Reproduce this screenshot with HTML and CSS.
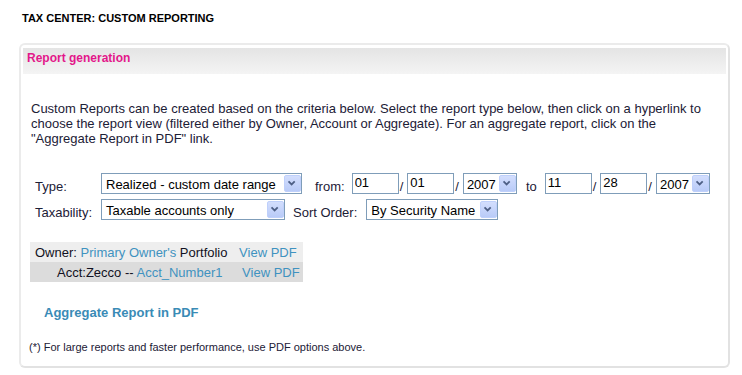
FILE: index.html
```html
<!DOCTYPE html>
<html lang="en">
<head>
    <meta charset="UTF-8">
    <title>Tax Center: Custom Reporting</title>
    <link rel="stylesheet" href="styles.css">
</head>
<body>
    <div class="page">
        <h1>TAX CENTER: CUSTOM REPORTING</h1>

        <div class="panel">
            <div class="panel-header">Report generation</div>

            <div class="panel-body">
                <p class="intro">Custom Reports can be created based on the criteria below. Select the report type below, then click on a hyperlink to choose the report view (filtered either by Owner, Account or Aggregate). For an aggregate report, click on the "Aggregate Report in PDF" link.</p>

                <div class="criteria">
                    <div class="criteria-row">
                        <span class="label">Type:</span>
                        <div class="select select-type">
                            <span class="select-value">Realized - custom date range</span>
                            <span class="select-btn"><svg viewBox="0 0 17 17"><path d="M5 7l3.5 3.5L12 7"/></svg></span>
                        </div>
                        <span class="word word-from">from:</span>
                        <input class="date" type="text" value="01">
                        <span class="slash">/</span>
                        <input class="date" type="text" value="01">
                        <span class="slash">/</span>
                        <div class="select select-year">
                            <span class="select-value">2007</span>
                            <span class="select-btn"><svg viewBox="0 0 17 17"><path d="M5 7l3.5 3.5L12 7"/></svg></span>
                        </div>
                        <span class="word word-to">to</span>
                        <input class="date" type="text" value="11">
                        <span class="slash">/</span>
                        <input class="date" type="text" value="28">
                        <span class="slash">/</span>
                        <div class="select select-year">
                            <span class="select-value">2007</span>
                            <span class="select-btn"><svg viewBox="0 0 17 17"><path d="M5 7l3.5 3.5L12 7"/></svg></span>
                        </div>
                    </div>

                    <div class="criteria-row">
                        <span class="label">Taxability:</span>
                        <div class="select select-tax">
                            <span class="select-value">Taxable accounts only</span>
                            <span class="select-btn"><svg viewBox="0 0 17 17"><path d="M5 7l3.5 3.5L12 7"/></svg></span>
                        </div>
                        <span class="word word-sort">Sort Order:</span>
                        <div class="select select-sort">
                            <span class="select-value">By Security Name</span>
                            <span class="select-btn"><svg viewBox="0 0 17 17"><path d="M5 7l3.5 3.5L12 7"/></svg></span>
                        </div>
                    </div>
                </div>

                <div class="owners">
                    <div class="owner-row">
                        Owner: <a href="#" class="link">Primary Owner's</a> Portfolio
                        <a href="#" class="link view-pdf">View PDF</a>
                    </div>
                    <div class="owner-row account">
                        Acct:Zecco -- <a href="#" class="link">Acct_Number1</a>
                        <a href="#" class="link view-pdf">View PDF</a>
                    </div>
                </div>

                <a href="#" class="aggregate">Aggregate Report in PDF</a>

                <div class="note">(*) For large reports and faster performance, use PDF options above.</div>
            </div>
        </div>
    </div>
</body>
</html>
```

FILE: styles.css
```css
body {
    margin: 0;
    padding: 0;
    font-family: 'Liberation Sans', Arial, sans-serif;
    font-size: 13px;
    color: #1c2036;
    background: #ffffff;
}

.page {
    padding: 12px 0 0 19px;
}

h1 {
    margin: 0 0 18px 0;
    padding-left: 3px;
    font-size: 11px;
    line-height: 13px;
    font-weight: bold;
    color: #000000;
}

.panel {
    width: 711px;
    box-sizing: border-box;
    border: 2px solid #ebebeb;
    border-right-color: #e2e2e2;
    border-bottom-color: #e2e2e2;
    border-radius: 6px;
    padding: 3px 2px 0 2px;
}

.panel-header {
    height: 26px;
    box-sizing: border-box;
    padding: 3px 0 0 4px;
    background: linear-gradient(to bottom, #e4e4e4, #f4f4f4);
    color: #e3178a;
    font-size: 12px;
    line-height: 14px;
    font-weight: bold;
}

.panel-body {
    padding: 27px 0 12px 7px;
}

.intro {
    margin: 0 0 0 1px;
    width: 690px;
    line-height: 15px;
}

.criteria {
    margin-top: 27px;
    padding-left: 5px;
}

.criteria-row {
    display: flex;
    align-items: flex-end;
    line-height: 15px;
}

.criteria-row + .criteria-row {
    margin-top: 5px;
}

.label {
    flex: 0 0 66px;
}

.word-from {
    margin: 0 7px 0 13px;
}

.word-to {
    margin: 0 8px 0 9px;
}

.word-sort {
    margin: 0 9px 0 8px;
}

.slash {
    margin: 0 4px 0 1px;
}

.date {
    width: 47px;
    height: 21px;
    box-sizing: border-box;
    margin: 0;
    padding: 0 2px 3px 2px;
    border: 1px solid #7f9db9;
    border-radius: 0;
    font-family: 'Liberation Sans', Arial, sans-serif;
    font-size: 13px;
    line-height: 15px;
    color: #000000;
    background: #ffffff;
    outline: none;
}

.select {
    display: flex;
    align-items: flex-start;
    height: 21px;
    box-sizing: border-box;
    border: 1px solid #7f9db9;
    background: #ffffff;
    color: #000000;
}

.select-value {
    flex: 1;
    margin-top: 3px;
    padding-left: 4px;
    white-space: nowrap;
    overflow: hidden;
}

.select-btn {
    width: 17px;
    height: 17px;
    box-sizing: border-box;
    margin-top: 1px;
    border: 1px solid #bfd0fb;
    border-radius: 2px;
    background: linear-gradient(to bottom, #d3defd, #b9cbf8);
}

.select-btn svg {
    display: block;
    width: 15px;
    height: 15px;
}

.select-btn path {
    fill: none;
    stroke: #4d5f85;
    stroke-width: 2;
    transform: translate(-1px, -1px);
}

.select-type {
    width: 201px;
}

.select-year {
    width: 54px;
}

.select-year .select-value {
    padding-left: 3px;
}

.select-tax {
    width: 184px;
}

.select-sort {
    width: 132px;
}

.owners {
    width: 273px;
    margin-top: 22px;
}

.owner-row {
    height: 20px;
    box-sizing: border-box;
    padding: 1px 0 0 5px;
    line-height: 19px;
    background: #eeeeee;
    color: #111122;
    white-space: nowrap;
}

.owner-row.account {
    padding-left: 27px;
    background: #dcdcdc;
}

.link {
    color: #3f92c0;
    text-decoration: none;
}

.view-pdf {
    margin-left: 8px;
}

.account .view-pdf {
    margin-left: 16px;
}

.aggregate {
    display: block;
    margin-top: 23px;
    padding-left: 14px;
    font-size: 13px;
    line-height: 15px;
    font-weight: bold;
    color: #3a8bb6;
    text-decoration: none;
}

.note {
    margin: 21px 0 0 -1px;
    font-size: 11px;
    line-height: 13px;
    color: #1c2036;
}
```
